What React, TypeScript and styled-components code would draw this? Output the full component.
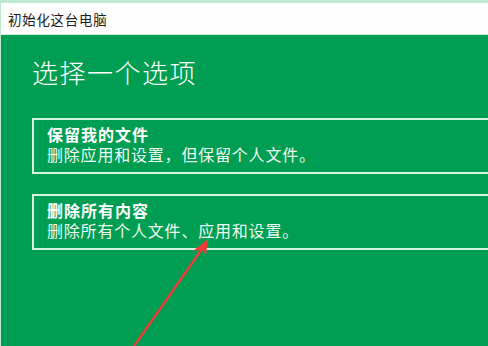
import React from 'react'
import styled, { createGlobalStyle } from 'styled-components'

const GlobalStyle = createGlobalStyle`
  html, body {
    margin: 0;
    padding: 0;
    width: 488px;
    height: 346px;
    overflow: hidden;
    background: #009e52;
  }
  body {
    font-family: "Liberation Sans", "Noto Sans CJK SC", sans-serif;
  }
`

const Window = styled.div`
  position: relative;
  width: 488px;
  height: 346px;
  box-sizing: border-box;
  border-top: 3px solid #bfe8d0;
  border-left: 1px solid #bfe8d0;
  background: #009e52;
  overflow: hidden;
`

const TitleBar = styled.div`
  height: 31px;
  display: flex;
  align-items: center;
  padding-left: 7px;
  background: #fdfefd;
  border-bottom: 1px solid #cdeedb;
  color: #1c1c1c;
  font-size: 13.5px;
  letter-spacing: 0.7px;
`

const Content = styled.div`
  padding: 21px 0 0 31px;
  width: 520px;
`

const Heading = styled.h1`
  margin: 0 0 26px;
  font-size: 26px;
  line-height: 36px;
  font-weight: 300;
  color: #ffffff;
  letter-spacing: 1.5px;
`

const Option = styled.div`
  box-sizing: border-box;
  width: 500px;
  border: 2px solid #d6f3e1;
  padding: 6px 13px;
  margin-bottom: 20px;
  color: #ffffff;
`

const OptionTitle = styled.div`
  font-size: 16px;
  line-height: 20px;
  font-weight: 700;
  letter-spacing: 1px;
`

const OptionText = styled.div`
  font-size: 16px;
  line-height: 20px;
  font-weight: 400;
  letter-spacing: 0.8px;
  color: #eefaf2;
`

const Arrow = styled.svg`
  position: absolute;
  left: 0;
  top: 0;
  pointer-events: none;
`

const options = [
  { title: '保留我的文件', text: '删除应用和设置，但保留个人文件。' },
  { title: '删除所有内容', text: '删除所有个人文件、应用和设置。' },
]

export default function App() {
  return (
    <Window>
      <GlobalStyle />
      <TitleBar>初始化这台电脑</TitleBar>
      <Content>
        <Heading>选择一个选项</Heading>
        {options.map((o) => (
          <Option key={o.title}>
            <OptionTitle>{o.title}</OptionTitle>
            <OptionText>{o.text}</OptionText>
          </Option>
        ))}
      </Content>
      <Arrow width="488" height="346" viewBox="0 0 488 346">
        <line x1="129" y1="349" x2="203" y2="243" stroke="#ec3b3b" strokeWidth="2.5" strokeLinecap="round" />
        <polygon points="207,236 192,248 201,247 205,252" fill="#ec3b3b" />
      </Arrow>
    </Window>
  )
}
